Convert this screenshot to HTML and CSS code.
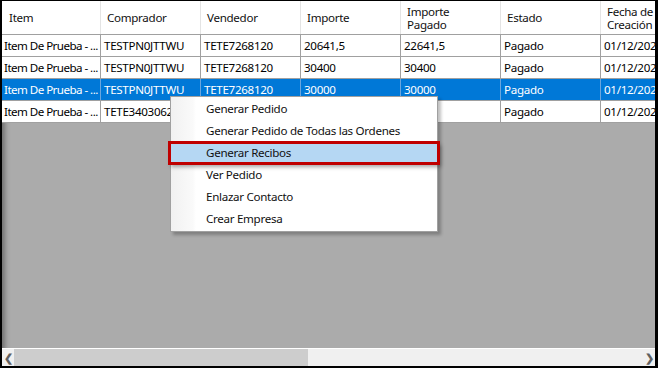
FILE: index.html
```html
<!DOCTYPE html>
<html lang="es">
<head>
  <meta charset="UTF-8" />
  <title>Ordenes</title>
  <link rel="stylesheet" href="styles.css">
</head>
<body>
  <div class="window">
    <div class="grid-area">
      <div class="grid">
        <div class="row head">
          <div class="cell">Item</div>
          <div class="cell">Comprador</div>
          <div class="cell">Vendedor</div>
          <div class="cell">Importe</div>
          <div class="cell">Importe<br>Pagado</div>
          <div class="cell">Estado</div>
          <div class="cell">Fecha de<br>Creación</div>
        </div>
        <div class="row">
          <div class="cell">Item De Prueba - ...</div>
          <div class="cell">TESTPN0JTTWU</div>
          <div class="cell">TETE7268120</div>
          <div class="cell">20641,5</div>
          <div class="cell">22641,5</div>
          <div class="cell">Pagado</div>
          <div class="cell">01/12/2024</div>
        </div>
        <div class="row">
          <div class="cell">Item De Prueba - ...</div>
          <div class="cell">TESTPN0JTTWU</div>
          <div class="cell">TETE7268120</div>
          <div class="cell">30400</div>
          <div class="cell">30400</div>
          <div class="cell">Pagado</div>
          <div class="cell">01/12/2024</div>
        </div>
        <div class="row selected">
          <div class="cell">Item De Prueba - ...</div>
          <div class="cell">TESTPN0JTTWU</div>
          <div class="cell">TETE7268120</div>
          <div class="cell">30000</div>
          <div class="cell">30000</div>
          <div class="cell">Pagado</div>
          <div class="cell">01/12/2024</div>
        </div>
        <div class="row">
          <div class="cell">Item De Prueba - ...</div>
          <div class="cell">TETE3403062</div>
          <div class="cell">TETE7268120</div>
          <div class="cell">30000</div>
          <div class="cell">30000</div>
          <div class="cell">Pagado</div>
          <div class="cell">01/12/2024</div>
        </div>
      </div>

      <div class="menu">
        <div class="menu-item">Generar Pedido</div>
        <div class="menu-item">Generar Pedido de Todas las Ordenes</div>
        <div class="menu-item active">Generar Recibos</div>
        <div class="menu-item">Ver Pedido</div>
        <div class="menu-item">Enlazar Contacto</div>
        <div class="menu-item">Crear Empresa</div>
      </div>
    </div>

    <div class="hscroll">
      <div class="arrow">&#x276E;</div>
      <div class="track">
        <div class="thumb"></div>
      </div>
      <div class="arrow">&#x276F;</div>
    </div>
  </div>
</body>
</html>
```
FILE: styles.css
```css
html, body {
  margin: 0;
  background: #000;
  height: 368px;
  overflow: hidden;
}
body {
  font-family: "Noto Sans", "Open Sans", sans-serif;
  font-size: 11.6px;
  letter-spacing: -0.3px;
  color: #000;
  padding: 1px 3px 2px 2px;
  box-sizing: border-box;
}
.window {
  height: 365px;
  display: flex;
  flex-direction: column;
  background: #ababab;
  overflow: hidden;
  position: relative;
  box-shadow: inset 6px 0 5px -3px rgba(0,0,0,0.35);
}
.grid-area {
  flex: 1;
  position: relative;
  overflow: hidden;
}
.grid {
  width: 720px;
}
.row {
  display: grid;
  grid-template-columns: 99px repeat(6, 100px);
  height: 21px;
  background: #fff;
  border-bottom: 1px solid #a0a0a0;
}
.row .cell {
  border-right: 1px solid #a0a0a0;
  padding: 0 0 0 3px;
  line-height: 21px;
  white-space: nowrap;
  overflow: hidden;
}
.row .cell:first-child {
  padding-left: 2px;
  letter-spacing: -0.55px;
}
.head {
  height: 33px;
  border-bottom: 1px solid #a0a0a0;
}
.head .cell {
  border-right: 1px solid #e4e4e4;
  display: flex;
  align-items: center;
  line-height: 13px;
  padding-left: 6px;
  color: #111;
}
.head .cell:first-child {
  padding-left: 7px;
  letter-spacing: -0.3px;
}
.selected {
  background: #0078d7;
  color: #fff;
}
.selected .cell {
  border-right-color: #6aa6de;
}
.menu {
  position: absolute;
  left: 168px;
  top: 95px;
  width: 266px;
  padding: 1px 0 1px;
  background: #fff;
  border: 1px solid #a0a0a0;
  box-shadow: 3px 3px 3px rgba(0,0,0,0.25);
  background-image: linear-gradient(to right, #f1f1f1 0, #fafafa 22px, #fff 25px);
}
.menu-item {
  height: 22px;
  line-height: 22px;
  padding-left: 35px;
  color: #111;
}
.menu-item.active {
  background: #b5d7f3;
  outline: 3px solid #c00000;
  outline-offset: -2px;
  margin: 0 -2px;
  padding-left: 37px;
  box-shadow: 2px 3px 4px rgba(0,0,0,0.35);
}
.hscroll {
  height: 17px;
  display: flex;
  background: #f0f0f0;
  border-top: 1px solid #fff;
}
.arrow {
  width: 12px;
  text-align: center;
  font-size: 11px;
  line-height: 17px;
  font-weight: bold;
  color: #606060;
}
.track {
  flex: 1;
  display: flex;
}
.thumb {
  width: 294px;
  margin-left: 0;
  background: #cdcdcd;
}
```
